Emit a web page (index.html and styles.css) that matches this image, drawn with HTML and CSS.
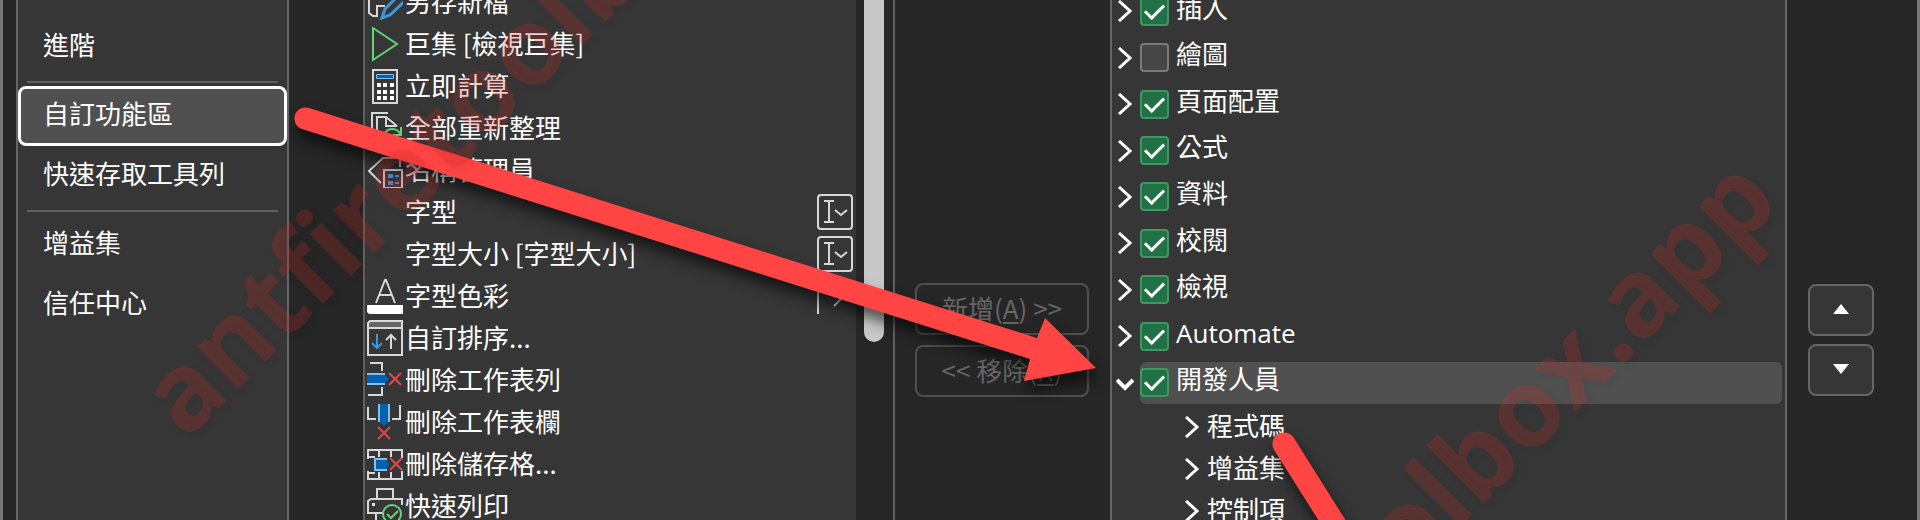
FILE: index.html
```html
<!DOCTYPE html>
<html lang="zh-Hant">
<head>
<meta charset="utf-8">
<title>Excel 選項</title>
<link rel="stylesheet" href="styles.css">
</head>
<body>
<div class="dialog">
  <nav class="nav">
    <button class="nav-item">進階</button>
    <hr class="nav-rule">
    <button class="nav-item selected">自訂功能區</button>
    <button class="nav-item">快速存取工具列</button>
    <hr class="nav-rule">
    <button class="nav-item">增益集</button>
    <button class="nav-item">信任中心</button>
  </nav>

  <div class="source">
    <ul class="commands">
      <li class="command"><svg class="icon" viewBox="0 0 36 36"><path class="line" d="M2 0v29l4 3h4v-10h8"/><path fill="#363636" stroke="#3f96dc" stroke-width="3" d="M15 34l3-9 20-20 6 6-21 20z"/></svg><span class="label">另存新檔</span></li>
      <li class="command"><svg class="icon" viewBox="0 0 36 36"><path fill="none" stroke="#63d477" stroke-width="2" d="M6 2v32l24-16z"/></svg><span class="label">巨集 [檢視巨集]</span></li>
      <li class="command"><svg class="icon" viewBox="0 0 36 36"><path class="line" d="M6 2h24v33H6z"/><path fill="#0063b1" stroke="#83beec" d="M9.500 6.500h17v4h-17z"/><path fill="#fff" d="M10 15h4v4h-4zM16 15h4v4h-4zM23 15h4v4h-4zM10 22h4v4h-4zM16 22h4v4h-4zM23 22h4v4h-4zM10 28h4v4h-4zM16 28h4v4h-4zM23 28h4v4h-4z"/></svg><span class="label">立即計算</span></li>
      <li class="command"><svg class="icon" viewBox="0 0 36 36"><path class="line" d="M5 28V3h16M10 31V7h9l11 9M19 7v9h11"/><path fill="none" stroke="#63d477" stroke-width="2" d="M17 25c3-8 13-8 17 0m0-8v8h-8"/></svg><span class="label">全部重新整理</span></li>
      <li class="command"><svg class="icon" viewBox="0 0 36 36"><path class="line" d="M33 15V6H16L2 19l12 12M17 18h18v18H17z"/><path fill="#3f96dc" d="M21 22h5v4h-5zM28 23h4v2h-4zM21 29h5v4h-5zM28 30h4v2h-4z"/></svg><span class="label">名稱管理員</span></li>
      <li class="command"><span class="icon"></span><span class="label">字型</span><svg class="combo" viewBox="0 0 36 36"><rect class="line" x="1" y="1" width="34" height="34" rx="3"/><path class="line" d="M7 7h10M12 7v21M7 28h10"/><path class="line" stroke-width="3" d="M18 16l6 5 6-5"/></svg></li>
      <li class="command"><span class="icon"></span><span class="label">字型大小 [字型大小]</span><svg class="combo" viewBox="0 0 36 36"><rect class="line" x="1" y="1" width="34" height="34" rx="3"/><path class="line" d="M7 7h10M12 7v21M7 28h10"/><path class="line" stroke-width="3" d="M18 16l6 5 6-5"/></svg></li>
      <li class="command"><svg class="icon" viewBox="0 0 36 36"><path class="line" d="M9 25L18 2h1l9 23M12 17h13"/><path fill="#fff" d="M0 27h36v9H2l-2-2z"/></svg><span class="label">字型色彩</span><svg class="combo" viewBox="0 0 36 36"><path class="line" d="M1 0v36M17 28l7-7-7-7"/></svg></li>
      <li class="command"><svg class="icon" viewBox="0 0 36 36"><path fill="#666" d="M1 1h34v6H1z"/><path class="line" d="M1 3l2-2h32v34H1zM1 8h34M24 29V15M19 20l5-5 5 5"/><path fill="none" stroke="#3f96dc" stroke-width="2" d="M10 14v14M5 23l5 5 5-5"/></svg><span class="label">自訂排序...</span></li>
      <li class="command"><svg class="icon" viewBox="0 0 36 36"><path class="line" d="M3 1h12v8M1 33h14v-8"/><path fill="#0063b1" d="M0 12h17l5 5-5 5H0z"/><path stroke="#83beec" stroke-width="2" fill="none" d="M0 12h18M0 22h18"/><path class="cross" d="M22 11l12 12M34 11L22 23"/></svg><span class="label">刪除工作表列</span></li>
      <li class="command"><svg class="icon" viewBox="0 0 36 36"><path class="line" d="M1 3v12h8M33 1v14h-8"/><path fill="#0063b1" d="M12 0h10v17l-5 5-5-5z"/><path stroke="#83beec" stroke-width="2" fill="none" d="M12 0v18M22 0v18"/><path class="cross" d="M11 23l12 12M23 23L11 35"/></svg><span class="label">刪除工作表欄</span></li>
      <li class="command"><svg class="icon" viewBox="0 0 36 36"><path class="line" d="M8 11H1V4h34v8M12 4v7M24 4v7M8 27H1v6h34v-8M12 26v7M24 26v7M1 11v2M1 25v2"/><path fill="#0063b1" d="M8 13h11l3 5-3 6H8z"/><path fill="none" stroke="#83beec" stroke-width="2" d="M20 13H8v11h12"/><path class="cross" d="M23 12l12 12M35 12L23 24"/></svg><span class="label">刪除儲存格...</span></li>
      <li class="command"><svg class="icon" viewBox="0 0 36 36"><path class="line" d="M10 11V1h16v10M9 25H1V13l3-2h31v6M9 36V25h8"/><path fill="#ddd" d="M5 15h3v3H5z"/><circle cx="25" cy="26" r="9" fill="#363636" stroke="#63d477" stroke-width="2"/><path fill="none" stroke="#63d477" stroke-width="2" d="M20 26l4 4 7-7"/></svg><span class="label">快速列印</span></li>
    </ul>
    <div class="track"><div class="thumb"></div></div>
  </div>

  <div class="transfer">
    <button class="move" disabled>新增(<u>A</u>) &gt;&gt;</button>
    <button class="move" disabled>&lt;&lt; 移除(<u>R</u>)</button>
  </div>

  <div class="tree">
    <div class="tabs">
      <div class="tab"><svg class="chevron" viewBox="0 0 18 22"><path d="M3 1l11 10L3 21"/></svg><label class="tab-label"><input type="checkbox" checked><span class="label">插入</span></label></div>
      <div class="tab"><svg class="chevron" viewBox="0 0 18 22"><path d="M3 1l11 10L3 21"/></svg><label class="tab-label"><input type="checkbox"><span class="label">繪圖</span></label></div>
      <div class="tab"><svg class="chevron" viewBox="0 0 18 22"><path d="M3 1l11 10L3 21"/></svg><label class="tab-label"><input type="checkbox" checked><span class="label">頁面配置</span></label></div>
      <div class="tab"><svg class="chevron" viewBox="0 0 18 22"><path d="M3 1l11 10L3 21"/></svg><label class="tab-label"><input type="checkbox" checked><span class="label">公式</span></label></div>
      <div class="tab"><svg class="chevron" viewBox="0 0 18 22"><path d="M3 1l11 10L3 21"/></svg><label class="tab-label"><input type="checkbox" checked><span class="label">資料</span></label></div>
      <div class="tab"><svg class="chevron" viewBox="0 0 18 22"><path d="M3 1l11 10L3 21"/></svg><label class="tab-label"><input type="checkbox" checked><span class="label">校閱</span></label></div>
      <div class="tab"><svg class="chevron" viewBox="0 0 18 22"><path d="M3 1l11 10L3 21"/></svg><label class="tab-label"><input type="checkbox" checked><span class="label">檢視</span></label></div>
      <div class="tab"><svg class="chevron" viewBox="0 0 18 22"><path d="M3 1l11 10L3 21"/></svg><label class="tab-label"><input type="checkbox" checked><span class="label latin">Automate</span></label></div>
      <div class="tab"><svg class="chevron open" viewBox="0 0 18 22"><path d="M1 8l8 8 8-8"/></svg><label class="tab-label current"><input type="checkbox" checked><span class="label">開發人員</span></label></div>
    </div>
    <ul class="groups">
      <li class="group"><svg class="chevron" viewBox="0 0 18 22"><path d="M3 1l11 10L3 21"/></svg><span class="label">程式碼</span></li>
      <li class="group"><svg class="chevron" viewBox="0 0 18 22"><path d="M3 1l11 10L3 21"/></svg><span class="label">增益集</span></li>
      <li class="group"><svg class="chevron" viewBox="0 0 18 22"><path d="M3 1l11 10L3 21"/></svg><span class="label">控制項</span></li>
    </ul>
  </div>

  <div class="order">
    <button class="step" aria-label="上移"><svg class="triangle" viewBox="0 0 16 10"><path d="M8 0l8 10H0z"/></svg></button>
    <button class="step" aria-label="下移"><svg class="triangle" viewBox="0 0 16 10"><path d="M0 0h16L8 10z"/></svg></button>
  </div>

  <svg class="overlay" viewBox="0 0 1920 520" aria-hidden="true">
    <g class="arrows">
      <path d="M309 108L1037 338L1045 318L1096 368L1024 381L1030 359L302 129A11 11 0 0 1 309 108z"/>
      <path class="tail" d="M1284 444L1364 571"/>
    </g>
    <text class="watermark" transform="translate(186 441) rotate(-45)">antfiretoolbox.app</text>
    <text class="watermark" transform="translate(1065 922) rotate(-45)">antfiretoolbox.app</text>
  </svg>
</div>
</body>
</html>
```
FILE: styles.css
```css
* { box-sizing: border-box; }

body {
  margin: 0;
  background: #262626;
  color: #fff;
  font: 26px/36px "Noto Sans CJK TC", sans-serif;
}

button { font: inherit; color: inherit; }
ul { list-style: none; padding: 0; }

.dialog {
  position: relative;
  display: flex;
  height: 100vh;
  overflow: hidden;
  border: solid #777;
  border-width: 0 3px;
  padding-left: 13px;
}

.nav {
  flex: 0 0 273px;
  display: flex;
  flex-direction: column;
  padding-top: 17px;
  background: #363636;
  border: solid #666;
  border-width: 0 2px;
}
.nav-item {
  height: 60px;
  padding: 0 22px 6px;
  background: none;
  border: 3px solid transparent;
  border-radius: 8px;
  text-align: left;
}
.nav-item.selected { background: #505050; border-color: #fff; }
.nav-rule {
  width: calc(100% - 18px);
  margin: 4px auto 3px;
  border: 0;
  border-top: 2px solid #606060;
}

.source {
  flex: 0 0 532px;
  display: flex;
  margin-left: 74px;
  border: solid #606060;
  border-width: 0 2px;
}
.commands {
  flex: 1;
  margin: -19px 0 0;
  padding: 0 3px 0 2px;
  background: #363636;
}
.command { display: flex; align-items: center; height: 42px; white-space: nowrap; }
.icon, .combo { flex: none; width: 36px; height: 36px; }
.command .label { flex: 1; padding: 0 0 3px 2px; }
.line { fill: none; stroke: #d8d8d8; stroke-width: 2; }
.cross { fill: none; stroke: #e04848; stroke-width: 2; }

.track { flex: 0 0 37px; padding: 0 9px 0 8px; }
.thumb { height: 342px; background: #c8c8c8; border-radius: 0 0 10px 10px; }

.transfer {
  flex: 0 0 215px;
  display: flex;
  flex-direction: column;
  gap: 10px;
  padding: 283px 21px 0 20px;
}
.move {
  height: 52px;
  padding: 0 0 2px;
  background: none;
  border: 2px solid #505050;
  border-radius: 8px;
  color: #666;
  white-space: nowrap;
}
.move u { text-underline-offset: 3px; }

.tree {
  flex: 1;
  min-width: 0;
  background: #363636;
  border: solid #666;
  border-width: 0 2px;
}
.tabs {
  display: grid;
  grid-template-rows: repeat(9, 1fr);
  height: 418px;
  margin-top: -12px;
}
.tab { display: flex; align-items: center; gap: 6px; padding: 0 3px 0 4px; }
.chevron { flex: none; width: 18px; height: 22px; fill: none; stroke: #fff; stroke-width: 3; }
.chevron.open { stroke-width: 4; }
.tab-label { flex: 1; display: flex; align-items: center; height: 42px; border-radius: 6px; }
.tab-label.current { background: #505050; }
.tab-label .label { padding: 0 0 9px 7px; }
.tab-label .latin { padding-bottom: 7px; font-family: "Open Sans", sans-serif; }

input[type="checkbox"] {
  appearance: none;
  display: grid;
  place-items: center;
  width: 29px;
  height: 29px;
  margin: 0;
  background: #464646;
  border: 2px solid #7a7a7a;
  border-radius: 4px;
}
input[type="checkbox"]:checked { background: #207245; border-color: #439467; }
input[type="checkbox"]:checked::before {
  content: "";
  width: 16px;
  height: 8px;
  margin-bottom: 4px;
  border: solid #fff;
  border-width: 0 0 3px 3px;
  transform: rotate(-45deg);
}

.groups { margin: 0; padding-left: 71px; }
.group { display: flex; align-items: center; gap: 6px; height: 42px; }
.group .label { padding-bottom: 4px; }

.order {
  flex: 0 0 130px;
  display: flex;
  flex-direction: column;
  gap: 8px;
  padding: 284px 43px 0 21px;
}
.step {
  height: 52px;
  padding: 0 0 2px;
  background: #363636;
  border: 2px solid #666;
  border-radius: 8px;
}
.triangle { display: block; width: 16px; height: 10px; margin: 0 auto; fill: #fff; }

.overlay {
  position: absolute;
  top: 0;
  left: -3px;
  width: 1920px;
  height: 520px;
  pointer-events: none;
}
.arrows { fill: #ff4444; filter: drop-shadow(3px 10px 7px rgba(0, 0, 0, .6)); }
.tail { stroke: #ff4444; stroke-width: 23px; stroke-linecap: round; }
.watermark {
  font: bold 108px "Open Sans", sans-serif;
  fill: rgba(220, 40, 40, .22);
  text-shadow: 0 5px 8px rgba(0, 0, 0, .2);
}
```
